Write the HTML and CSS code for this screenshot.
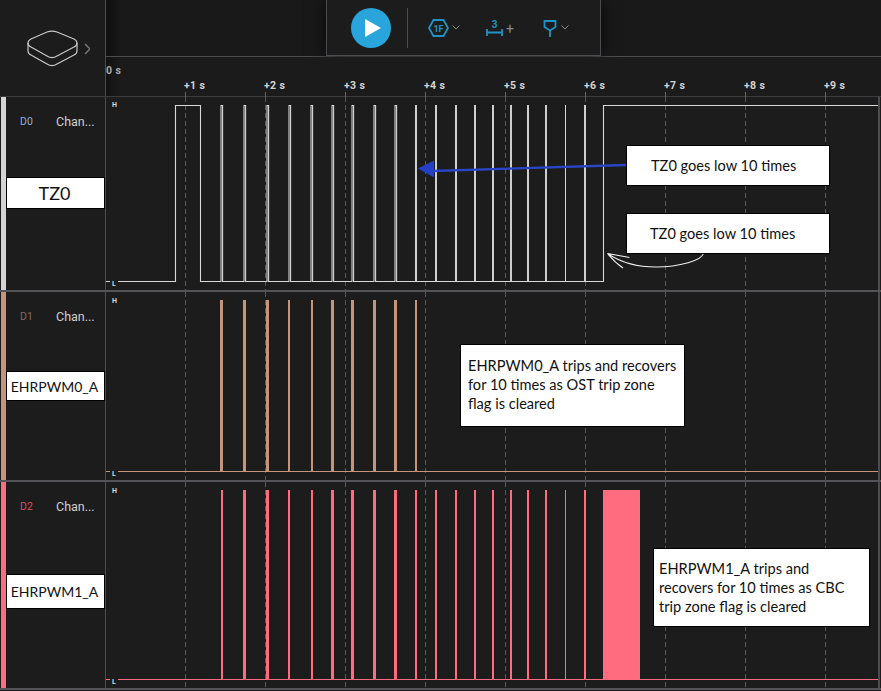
FILE: index.html

```html
<!DOCTYPE html>
<html lang="en">
<head>
    <meta charset="UTF-8">
    <meta name="viewport" content="width=device-width, initial-scale=1.0">
    <title>Logic Analyzer Capture</title>
    <link rel="stylesheet" href="styles.css">
</head>
<body>

<div class="app">
    <!-- header: device picker, toolbar and time ruler -->
    <div class="header">
        <div class="device">
            <svg class="device-icon" width="64" height="38" viewBox="26 29 64 38">
                <path d="M28 43C28 41 29 40 31 39L47 32C50 31 54 31 57 32L74 39C76 40 77 41 77 43C77 45 76 46 74 47L57 56C54 58 50 58 47 56L31 47C29 46 28 45 28 43Z"/>
                <path d="M28 43V51C28 53 29 54 31 55L47 64C50 66 54 66 57 64L74 55C76 54 77 53 77 51V43"/>
                <path class="device-arrow" d="M85 44L90 49L85 54"/>
            </svg>
        </div>
        <div class="header-main">
            <div class="top-strip">
                <div class="toolbar">
                    <div class="play">
                        <svg width="16" height="18" viewBox="0 0 16 18"><path d="M0 0L16 9L0 18Z"/></svg>
                    </div>
                    <div class="divider"></div>
                    <svg class="tool tool-hex" width="21" height="18" viewBox="0 0 21 18">
                        <path d="M1 9L5.5 1H15.5L20 9L15.5 17H5.5Z"/>
                        <text x="10.5" y="12.5">1F</text>
                    </svg>
                    <svg class="chevron" width="8" height="5" viewBox="0 0 8 5"><path d="M0.5 0.5L4 4L7.5 0.5"/></svg>
                    <svg class="tool tool-cursor" width="17" height="18" viewBox="0 0 17 18">
                        <text x="8.5" y="9">3</text>
                        <path d="M1 10V17M16 10V17M1 13.5H16"/>
                    </svg>
                    <span class="plus">+</span>
                    <svg class="tool tool-trigger" width="14" height="18" viewBox="0 0 14 18">
                        <path d="M1.5 2H12.5V8L7 11.5L1.5 8ZM7 11.5V18"/>
                    </svg>
                    <svg class="chevron" width="8" height="5" viewBox="0 0 8 5"><path d="M0.5 0.5L4 4L7.5 0.5"/></svg>
                </div>
            </div>
            <div class="ruler">
                <div class="ruler-zero">0 s</div>
                <div class="ticks">
                    <div class="tick">+1 s</div>
                    <div class="tick">+2 s</div>
                    <div class="tick">+3 s</div>
                    <div class="tick">+4 s</div>
                    <div class="tick">+5 s</div>
                    <div class="tick">+6 s</div>
                    <div class="tick">+7 s</div>
                    <div class="tick">+8 s</div>
                    <div class="tick">+9 s</div>
                </div>
            </div>
        </div>
    </div>

    <!-- channel D0 -->
    <div class="channel channel-d0">
        <div class="strip"></div>
        <div class="info">
            <div class="info-head"><span class="chan-id">D0</span><span class="chan-name">Chan...</span></div>
            <div class="signal-name signal-tz0">TZ0</div>
        </div>
        <svg class="wave" width="772" height="193" viewBox="106 97 772 193">
            <path class="grid" d="M185.5 97V290M265.5 97V290M345.5 97V290M425.5 97V290M505.5 97V290M585.5 97V290M665.5 97V290M745.5 97V290M825.5 97V290"/>
            <path class="trace" d="M106 281.5H175.5V105.5H200.5V281.5H221V105.5H222.6V281.5H244V105.5H245.6V281.5H267V105.5H268.6V281.5H289V105.5H290.6V281.5H311V105.5H312.6V281.5H332V105.5H333.6V281.5H352V105.5H353.6V281.5H374V105.5H375.6V281.5H395V105.5H396.6V281.5H603.5V105.5H878"/>
            <path class="trace trace-thick" d="M416 105V282M436 105V282M456 105V282M475 105V282M493 105V282M511 105V282M528 105V282M546 105V282M585 105V282"/>
            <path class="trace trace-thin" d="M565.5 105V282"/>
            <text class="level" x="112" y="107">H</text>
            <rect class="level-bg" x="110" y="279" width="8" height="8"/>
            <text class="level" x="112" y="286">L</text>
        </svg>
    </div>

    <!-- channel D1 -->
    <div class="channel channel-d1">
        <div class="strip"></div>
        <div class="info">
            <div class="info-head"><span class="chan-id">D1</span><span class="chan-name">Chan...</span></div>
            <div class="signal-name signal-pwm0">EHRPWM0_A</div>
        </div>
        <svg class="wave" width="772" height="188" viewBox="106 292 772 188">
            <path class="grid" d="M185.5 292V480M265.5 292V480M345.5 292V480M425.5 292V480M505.5 292V480M585.5 292V480M665.5 292V480M745.5 292V480M825.5 292V480"/>
            <path class="pulses" d="M106 471H878V472H106ZM220 300h3v171h-3ZM243 300h3v171h-3ZM266 300h3v171h-3ZM288 300h2v171h-2ZM311 300h2v171h-2ZM331 300h3v171h-3ZM351 300h3v171h-3ZM373 300h3v171h-3ZM394 300h3v171h-3ZM415 300h2v171h-2Z"/>
            <text class="level" x="112" y="303">H</text>
            <rect class="level-bg" x="110" y="469" width="8" height="8"/>
            <text class="level" x="112" y="476">L</text>
        </svg>
    </div>

    <!-- channel D2 -->
    <div class="channel channel-d2">
        <div class="strip"></div>
        <div class="info">
            <div class="info-head"><span class="chan-id">D2</span><span class="chan-name">Chan...</span></div>
            <div class="signal-name signal-pwm1">EHRPWM1_A</div>
        </div>
        <svg class="wave" width="772" height="206" viewBox="106 482 772 206">
            <path class="grid" d="M185.5 482V688M265.5 482V688M345.5 482V688M425.5 482V688M505.5 482V688M585.5 482V688M665.5 482V688M745.5 482V688M825.5 482V688"/>
            <path class="pulses" d="M106 679H878V680H106ZM221 490h2v189h-2ZM243 490h3v189h-3ZM266 490h3v189h-3ZM288 490h2v189h-2ZM311 490h2v189h-2ZM331 490h3v189h-3ZM351 490h3v189h-3ZM373 490h3v189h-3ZM394 490h3v189h-3ZM415 490h2v189h-2ZM435 490h2v189h-2ZM455 490h2v189h-2ZM474 490h2v189h-2ZM492 490h2v189h-2ZM510 490h2v189h-2ZM527 490h2v189h-2ZM545 490h2v189h-2ZM565 490h1v189h-1ZM584 490h2v189h-2ZM603 490h37v189h-37Z"/>
            <text class="level" x="112" y="493">H</text>
            <rect class="level-bg" x="110" y="677" width="8" height="8"/>
            <text class="level" x="112" y="684">L</text>
        </svg>
    </div>

    <!-- annotations pasted on top of the capture -->
    <svg class="marks" width="881" height="691" viewBox="0 0 881 691">
        <path class="blue-line" d="M626 165L432 171"/>
        <path class="blue-head" d="M418 168.5L434 160.5V177.5Z"/>
        <path class="white-arrow" d="M703 254C702 260 680 267 656 267C635 267 620 262 607.5 253.5M607.5 253.5L629.5 257.5M607.5 253.5C612 259 617 264 623 268"/>
    </svg>
    <div class="callout callout-tz0-a">TZ0 goes low 10 times</div>
    <div class="callout callout-tz0-b">TZ0 goes low 10 times</div>
    <div class="callout callout-pwm0">EHRPWM0_A trips and recovers<br>for 10 times as OST trip zone<br>flag is cleared</div>
    <div class="callout callout-pwm1">EHRPWM1_A trips and<br>recovers for 10 times as CBC<br>trip zone flag is cleared</div>
</div>

</body>
</html>
```

FILE: styles.css

```css
body {
    margin: 0;
    background-color: #1c1c1c;
    font-family: Roboto, sans-serif;
}
.app {
    position: relative;
    width: 881px;
    height: 691px;
    overflow: hidden;
}
.header {
    display: flex;
    height: 96px;
    border-bottom: 1px solid #3c3c40;
}
.device {
    width: 106px;
    flex-shrink: 0;
    box-sizing: border-box;
    padding: 29px 0 0 26px;
    border-right: 1px solid #4c4c50;
}
.device-icon {
    display: block;
    fill: none;
    stroke: #c8c8c8;
    stroke-width: 1.2;
}
.device-arrow {
    stroke: #777777;
    stroke-width: 1.5;
}
.header-main {
    flex: 1;
}
.top-strip {
    height: 56px;
    background: linear-gradient(to right, #101010, #191919 16px);
    border-bottom: 1px solid #4c4c50;
}
.toolbar {
    display: flex;
    align-items: center;
    box-sizing: border-box;
    width: 275px;
    height: 56px;
    margin-left: 220px;
    padding-left: 24px;
    background-color: #1c1c1c;
    border: 1px solid #4c4c50;
    border-top: none;
    box-shadow: 0 0 16px rgba(0, 0, 0, 0.7);
}
.play {
    display: flex;
    align-items: center;
    justify-content: center;
    width: 40px;
    height: 40px;
    flex-shrink: 0;
    border-radius: 50%;
    background-color: #29a5dc;
}
.play svg {
    margin-left: 3px;
    fill: #ffffff;
}
.divider {
    width: 1px;
    height: 40px;
    margin: 0 20px 0 16px;
    background-color: #4c4c50;
}
.tool {
    flex-shrink: 0;
    fill: none;
    stroke: #1f93c8;
    stroke-width: 1.8;
}
.tool text {
    fill: #1f93c8;
    stroke: none;
    font-family: Roboto, sans-serif;
    font-size: 10px;
    font-weight: 700;
    text-anchor: middle;
}
.tool-hex text {
    font-size: 9px;
}
.chevron {
    flex-shrink: 0;
    margin: 0 0 0 3px;
    fill: none;
    stroke: #888888;
}
.tool-cursor {
    margin-left: 26px;
}
.tool-trigger {
    margin-right: 0;
}
.plus {
    width: 12px;
    margin: 2px 25px 0 0;
    padding-left: 3px;
    color: #888888;
    font-size: 14px;
}
.tool-trigger + .chevron {
    margin-left: 4px;
}
.ruler {
    height: 39px;
    background: linear-gradient(to right, #111111, #1b1b1b 14px);
    color: #d4d4d4;
    font-size: 10.5px;
    font-weight: 700;
    letter-spacing: 0.4px;
}
.ruler-zero {
    padding: 7px 0 0 0;
    height: 13px;
    line-height: 13px;
    color: #a8a8a8;
}
.ticks {
    display: flex;
    padding: 3px 0 0 78px;
}
.tick {
    width: 80px;
    flex-shrink: 0;
    height: 12px;
    line-height: 12px;
    white-space: nowrap;
}
.tick::after {
    content: "";
    display: block;
    width: 1px;
    height: 7px;
    margin: 0 0 0 1px;
    background-color: #666666;
}
.channel {
    display: flex;
    border-bottom: 2px solid #545458;
}
.channel-d0 {
    height: 193px;
}
.channel-d1 {
    height: 188px;
}
.channel-d2 {
    height: 206px;
}
.strip {
    width: 5px;
    margin-left: 1px;
    flex-shrink: 0;
}
.channel-d0 .strip {
    background-color: #d4d4d4;
}
.channel-d1 .strip {
    background-color: #c4957a;
}
.channel-d2 .strip {
    background-color: #ff6b7f;
}
.info {
    width: 99px;
    flex-shrink: 0;
    border-right: 1px solid #4c4c50;
    padding-top: 18px;
}
.info-head {
    display: flex;
    height: 14px;
    line-height: 14px;
    color: #d0d0d0;
    font-size: 12.5px;
}
.chan-id {
    width: 36px;
    padding-left: 14px;
    box-sizing: border-box;
    margin-right: 14px;
    font-size: 10.5px;
}
.channel-d0 .chan-id {
    color: #8fb0d8;
}
.channel-d1 .chan-id {
    color: #8a6a58;
}
.channel-d2 .chan-id {
    color: #d8505f;
}
.signal-name {
    display: flex;
    align-items: center;
    justify-content: center;
    box-sizing: border-box;
    width: 99px;
    padding-right: 2px;
    background-color: #ffffff;
    border: 1px solid #000000;
    color: #111111;
    font-family: Lato, sans-serif;
    font-size: 14px;
}
.signal-tz0 {
    height: 32px;
    margin-top: 48px;
    font-size: 18px;
}
.signal-pwm0 {
    height: 30px;
    margin-top: 47px;
}
.signal-pwm1 {
    height: 35px;
    margin-top: 60px;
}
.wave {
    display: block;
    flex-shrink: 0;
    border-right: 2px solid #4c4c50;
}
.grid {
    fill: none;
    stroke: #58585c;
    stroke-dasharray: 5 3;
}
.trace {
    fill: none;
    stroke: #d8d8d8;
    stroke-width: 1.1;
}
.trace-thick {
    stroke-width: 1.9;
}
.trace-thin {
    stroke-width: 1;
}
.channel-d1 .pulses {
    fill: #c4957a;
}
.channel-d2 .pulses {
    fill: #ff6b7f;
}
.level {
    fill: #d8d8d8;
    font-family: Roboto, sans-serif;
    font-size: 7px;
    font-weight: 700;
}
.level-bg {
    fill: #1c1c1c;
}
.marks {
    position: absolute;
    left: 0;
    top: 0;
    pointer-events: none;
}
.blue-line {
    fill: none;
    stroke: #2a45c8;
    stroke-width: 2.4;
}
.blue-head {
    fill: #2440c8;
}
.white-arrow {
    fill: none;
    stroke: #f0f0f0;
    stroke-width: 1.1;
}
.callout {
    position: absolute;
    box-sizing: border-box;
    background-color: #ffffff;
    border: 1px solid #000000;
    color: #111111;
    font-family: Lato, sans-serif;
    font-size: 14.6px;
    line-height: 19px;
    white-space: nowrap;
}
.callout-tz0-a {
    left: 626px;
    top: 145px;
    width: 204px;
    height: 41px;
    padding: 10px 0 0 24px;
}
.callout-tz0-b {
    left: 626px;
    top: 213px;
    width: 204px;
    height: 41px;
    padding: 10px 0 0 23px;
}
.callout-pwm0 {
    left: 460px;
    top: 344px;
    width: 225px;
    height: 83px;
    padding: 11px 0 0 7px;
}
.callout-pwm1 {
    left: 653px;
    top: 548px;
    width: 217px;
    height: 79px;
    padding: 10px 0 0 5px;
}
```
